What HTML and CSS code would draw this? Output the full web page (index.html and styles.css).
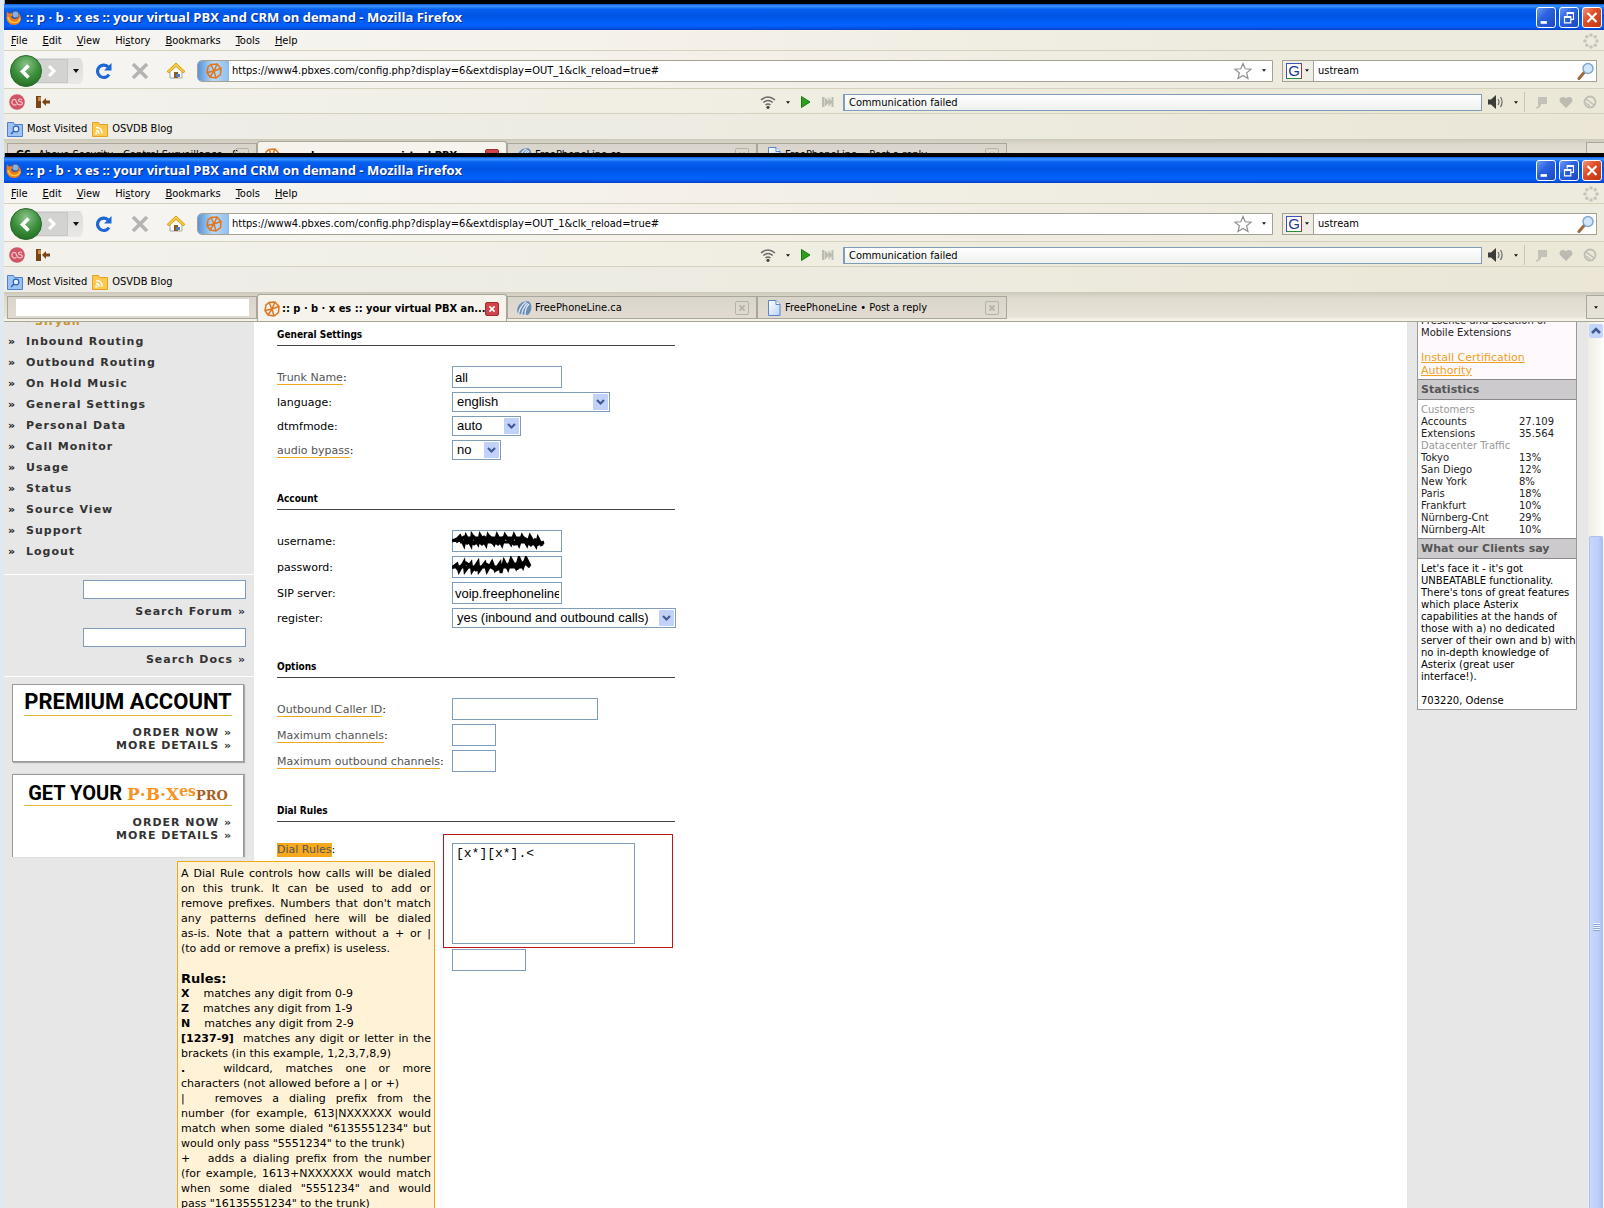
FILE: index.html
```html
<!DOCTYPE html>
<html lang="en">
<head>
<meta charset="utf-8">
<title>:: p · b · x es :: your virtual PBX and CRM on demand</title>
<link rel="stylesheet" href="styles.css">
</head>
<body>
<svg class="defs" aria-hidden="true">
  <defs>
    <radialGradient id="green" cx="50%" cy="30%" r="75%"><stop offset="0" stop-color="#8cc38a"/><stop offset=".55" stop-color="#3c8f3c"/><stop offset="1" stop-color="#1f6a22"/></radialGradient>
    <linearGradient id="sheet" x1="0" y1="0" x2="1" y2="1"><stop offset="0" stop-color="#fff"/><stop offset="1" stop-color="#b9d2f8"/></linearGradient>
    <symbol id="fox" viewBox="0 0 16 16"><circle cx="8.5" cy="7.5" r="6.5" fill="#2c56a8"/><circle cx="9.5" cy="5.5" r="3" fill="#7fb2e8"/><path d="M1 2.5 3 4.5 5.500 4 7 6 5 7.500C6 10 9 10.500 11 9.500 13 8.500 13 6 12 4c2 1.500 3.500 4 2.800 7C14 14 11 16 8 16 3.500 16 .500 12.500.500 9c0-2 .200-4.500.500-6.500z" fill="#ee7a1a"/><path d="M2 8c1 4 4 6 7.500 5.500 2.500-.500 4-2 4.600-4" fill="none" stroke="#f9c440" stroke-width="1.500"/></symbol>
    <symbol id="reload" viewBox="0 0 18 18"><path d="M14 12.500A6.200 6.200 0 1 1 13 4.800" fill="none" stroke="#1d66d8" stroke-width="3.200"/><path d="M16.500 1v7.500H9z" fill="#1d66d8"/></symbol>
    <symbol id="stop" viewBox="0 0 18 18"><path d="M2 2l14 14M16 2 2 16" stroke="#b4b4b2" stroke-width="3.600"/></symbol>
    <symbol id="home" viewBox="0 0 20 18"><path d="M4 8.500 10 3l6 5.500V16H4z" fill="#fdfdf6" stroke="#a6a6a0"/><path d="M1 9.500 10 1l9 8.500-2 1.200L10 4.500 3 10.700z" fill="#f7cf45" stroke="#d59a1d"/><path d="M8 10h4v6H8z" fill="#8b5a25"/><path d="M10 12h4v3h-4z" fill="#4a7fc9"/></symbol>
    <symbol id="pbx" viewBox="0 0 16 16"><g fill="none" stroke="#e0761f" stroke-width="1.500"><path d="M5 1.500 11 1l4 4.500-.500 6L10 15l-6-1L1 9.500 2 4z"/><path d="M8 8 5 1.500M8 8l7-2.500M8 8l2 7M8 8l-7 1.500M8 8l3-7M8 8l-4 6"/></g></symbol>
    <symbol id="star" viewBox="0 0 18 18"><path d="M9 1.500l2.200 5.300 5.800.400-4.400 3.700 1.400 5.600L9 13.400l-5 3.100 1.400-5.600L1 7.200l5.800-.400z" fill="#fff" stroke="#8f8f8f" stroke-width="1.200"/></symbol>
    <symbol id="glass" viewBox="0 0 18 18"><path d="M2 16.500 7.500 10" stroke="#a06a3c" stroke-width="3" stroke-linecap="round"/><circle cx="11" cy="6.500" r="5" fill="#cfe6fb" stroke="#7fa6cf" stroke-width="1.500"/></symbol>
    <symbol id="throb" viewBox="0 0 16 16"><g fill="#c6c5bd"><circle cx="8" cy="2" r="1.800"/><circle cx="12.200" cy="3.800" r="1.800"/><circle cx="14" cy="8" r="1.800"/><circle cx="12.200" cy="12.200" r="1.800"/><circle cx="8" cy="14" r="1.800"/><circle cx="3.800" cy="12.200" r="1.800"/><circle cx="2" cy="8" r="1.800"/><circle cx="3.800" cy="3.800" r="1.800"/></g></symbol>
    <symbol id="lastfm" viewBox="0 0 16 16"><circle cx="8" cy="8" r="7.800" fill="#d05565"/><path d="M7.500 10.500C5 12 2.800 10 2.800 8S5 4.800 6.500 5.800L8.500 10c2 1.500 4.800 1 4.800-.800S9.500 8 9.500 6.500s2-2 3.500-.800" fill="none" stroke="#f5c3c8" stroke-width="1.200"/></symbol>
    <symbol id="door" viewBox="0 0 16 16"><path d="M1 2h5v12H1z" fill="#7a4514"/><path d="M3 3h3v4H3z" fill="#c98a4a"/><path d="M7 8l4-4v2.500h4v3h-4V12z" fill="#7a4514"/></symbol>
    <symbol id="wifi" viewBox="0 0 16 16"><g fill="none" stroke="#6b6b68" stroke-width="1.600"><path d="M1 6q7-6 14 0M3.300 8.500q4.700-4 9.400 0M5.500 11q2.500-2 5 0"/></g><circle cx="8" cy="13.300" r="1.600" fill="#444"/></symbol>
    <symbol id="play" viewBox="0 0 12 12"><path d="M1.500.500 10 6l-8.500 5.500z" fill="#2ca01c" stroke="#1c7a12"/></symbol>
    <symbol id="skip" viewBox="0 0 12 12"><path d="M0 1h2v10H0zM2.500 1l4 4V1l3 4V1h2v10h-2V7l-3 4V7l-4 4z" fill="#bdbcb4"/></symbol>
    <symbol id="sound" viewBox="0 0 16 14"><path d="M0 4.500h3L8 0v14L3 9.500H0z" fill="#3c3c3a"/><path d="M10 4q2 3 0 6M12.500 2q3.200 5 0 10" fill="none" stroke="#6b6b68" stroke-width="1.200"/></symbol>
    <symbol id="tag" viewBox="0 0 14 14"><path d="M3 2h9v7H6v2H3z" fill="#c3c1b8"/><path d="M4 9v3l-3 1" stroke="#c3c1b8" stroke-width="1.500" fill="none"/></symbol>
    <symbol id="heart" viewBox="0 0 14 14"><path d="M7 13 1 7C-1 3 4 0 7 3.500 10 0 15 3 13 7z" fill="#bcbab1"/></symbol>
    <symbol id="ban" viewBox="0 0 14 14"><circle cx="7" cy="7" r="5.500" fill="none" stroke="#bfbdb4" stroke-width="1.800"/><path d="M3 4l8 6M3 8l4 3" stroke="#bfbdb4" stroke-width="1.500"/></symbol>
    <symbol id="folder" viewBox="0 0 16 16"><path d="M.500 1.500h6l1 2h8v12H.500z" fill="#9dc2f5" stroke="#4a80cf"/><circle cx="9" cy="8" r="2.800" fill="#e4f0ff" stroke="#2f62b4" stroke-width="1.200"/><path d="M7 10 4 13" stroke="#2f62b4" stroke-width="1.600"/></symbol>
    <symbol id="feed" viewBox="0 0 16 16"><path d="M.500 1.500h6l1 2h8v12H.500z" fill="#fbc94d" stroke="#e3a021"/><g fill="none" stroke="#fff" stroke-width="1.500"><path d="M4 6.500q6 0 6 6M4 9.500q3 0 3 3"/></g><circle cx="4.500" cy="12.500" r="1.200" fill="#fff"/></symbol>
    <symbol id="shell" viewBox="0 0 16 16"><path d="M2 14C-1 7 5 0 13 1.500 17 5 15.500 12 12 15z" fill="#6a8db8"/><g stroke="#e6eef6" stroke-width="1.200" fill="none"><path d="M2.500 14Q4 6 10 2M5.500 15q1-7 6-12M9 15q0-7 4-11"/></g></symbol>
    <symbol id="page" viewBox="0 0 13 16"><path d="M1 .500h7.500l4 4v11H1z" fill="url(#sheet)" stroke="#5b84cc"/><path d="M8.500.500v4h4" fill="#fff" stroke="#5b84cc"/></symbol>
    <symbol id="x" viewBox="0 0 14 14"><path d="M4 4l6 6M10 4l-6 6" stroke="currentColor" stroke-width="2"/></symbol>
    <symbol id="tri" viewBox="0 0 6 4"><path d="M0 0h6L3 4z" fill="#111"/></symbol>
    <symbol id="min" viewBox="0 0 20 20"><path d="M4 14h7v3H4z" fill="#fff"/></symbol>
    <symbol id="max" viewBox="0 0 20 20"><path d="M8 8V4.500h7V12h-3M8 5.500h7M5 9h7v7H5zM5 10h7" fill="none" stroke="#fff" stroke-width="1.300"/></symbol>
    <symbol id="cls" viewBox="0 0 20 20"><path d="M5 5l10 10M15 5 5 15" stroke="#fff" stroke-width="2.400"/></symbol>
  </defs>
</svg>

<div class="screen">
<section class="window window-behind">
  <header class="titlebar">
    <svg class="i16"><use href="#fox"/></svg>
    <h1>:: p · b · x es :: your virtual PBX and CRM on demand - Mozilla Firefox</h1>
    <button class="wb" aria-label="Minimize"><svg><use href="#min"/></svg></button>
    <button class="wb" aria-label="Restore"><svg><use href="#max"/></svg></button>
    <button class="wb wb-close" aria-label="Close"><svg><use href="#cls"/></svg></button>
  </header>
  <nav class="menubar">
    <button><u>F</u>ile</button><button><u>E</u>dit</button><button><u>V</u>iew</button><button>Hi<u>s</u>tory</button><button><u>B</u>ookmarks</button><button><u>T</u>ools</button><button><u>H</u>elp</button>
    <svg class="i16 push"><use href="#throb"/></svg>
  </nav>
  <div class="navbar">
    <div class="history">
      <button class="back" aria-label="Back"><svg viewBox="0 0 32 32"><circle cx="16" cy="16" r="15.500" fill="url(#green)" stroke="#2b6a2c"/><path d="M18.500 10.500 12.500 16.500l6 6" fill="none" stroke="#fff" stroke-width="3.600"/></svg></button>
      <button class="forward" aria-label="Forward"><svg viewBox="0 0 20 20"><path d="M8 5l5 5-5 5" fill="none" stroke="#fff" stroke-width="3"/></svg></button>
      <svg class="tri"><use href="#tri"/></svg>
    </div>
    <button class="tool" aria-label="Reload"><svg class="i18"><use href="#reload"/></svg></button>
    <button class="tool" aria-label="Stop"><svg class="i18"><use href="#stop"/></svg></button>
    <button class="tool" aria-label="Home"><svg class="i20"><use href="#home"/></svg></button>
    <div class="address">
      <span class="site"><svg class="i16"><use href="#pbx"/></svg></span>
      <input aria-label="Address" value="https://www4.pbxes.com/config.php?display=6&amp;extdisplay=OUT_1&amp;clk_reload=true#">
      <svg class="i18"><use href="#star"/></svg><svg class="tri small"><use href="#tri"/></svg>
    </div>
    <div class="search">
      <span class="engine"><b>G</b><svg class="tri small"><use href="#tri"/></svg></span>
      <input aria-label="Search" value="ustream">
      <svg class="i18"><use href="#glass"/></svg>
    </div>
  </div>
  <div class="radio">
    <svg class="i16"><use href="#lastfm"/></svg><svg class="i16"><use href="#door"/></svg>
    <div class="player">
      <svg class="i16"><use href="#wifi"/></svg><svg class="tri small"><use href="#tri"/></svg>
      <svg class="i12"><use href="#play"/></svg><svg class="i12"><use href="#skip"/></svg>
      <output>Communication failed</output>
      <svg class="i16"><use href="#sound"/></svg><svg class="tri small"><use href="#tri"/></svg>
      <i class="sep"></i>
      <svg class="i14"><use href="#tag"/></svg><svg class="i14"><use href="#heart"/></svg><svg class="i14"><use href="#ban"/></svg>
    </div>
  </div>
  <div class="bookmarks">
    <a href="#"><svg class="i16"><use href="#folder"/></svg>Most Visited</a>
    <a href="#"><svg class="i16"><use href="#feed"/></svg>OSVDB Blog</a>
  </div>
  <div class="tabs">
    <div class="tab tab-first"><b class="gs">GS</b><span>Above Security - Control Surveillance - S</span><button class="x" aria-label="Close tab"><svg><use href="#x"/></svg></button></div>
    <div class="tab tab-on"><svg class="i16"><use href="#pbx"/></svg><span>:: p · b · x es :: your virtual PBX an...</span><button class="x" aria-label="Close tab"><svg><use href="#x"/></svg></button></div>
    <div class="tab"><svg class="i16"><use href="#shell"/></svg><span>FreePhoneLine.ca</span><button class="x" aria-label="Close tab"><svg><use href="#x"/></svg></button></div>
    <div class="tab"><svg class="i16"><use href="#page"/></svg><span>FreePhoneLine • Post a reply</span><button class="x" aria-label="Close tab"><svg><use href="#x"/></svg></button></div>
    <button class="alltabs" aria-label="List all tabs"><svg class="tri small"><use href="#tri"/></svg></button>
  </div>
</section>

<section class="window window-front">
  <header class="titlebar">
    <svg class="i16"><use href="#fox"/></svg>
    <h1>:: p · b · x es :: your virtual PBX and CRM on demand - Mozilla Firefox</h1>
    <button class="wb" aria-label="Minimize"><svg><use href="#min"/></svg></button>
    <button class="wb" aria-label="Restore"><svg><use href="#max"/></svg></button>
    <button class="wb wb-close" aria-label="Close"><svg><use href="#cls"/></svg></button>
  </header>
  <nav class="menubar">
    <button><u>F</u>ile</button><button><u>E</u>dit</button><button><u>V</u>iew</button><button>Hi<u>s</u>tory</button><button><u>B</u>ookmarks</button><button><u>T</u>ools</button><button><u>H</u>elp</button>
    <svg class="i16 push"><use href="#throb"/></svg>
  </nav>
  <div class="navbar">
    <div class="history">
      <button class="back" aria-label="Back"><svg viewBox="0 0 32 32"><circle cx="16" cy="16" r="15.500" fill="url(#green)" stroke="#2b6a2c"/><path d="M18.500 10.500 12.500 16.500l6 6" fill="none" stroke="#fff" stroke-width="3.600"/></svg></button>
      <button class="forward" aria-label="Forward"><svg viewBox="0 0 20 20"><path d="M8 5l5 5-5 5" fill="none" stroke="#fff" stroke-width="3"/></svg></button>
      <svg class="tri"><use href="#tri"/></svg>
    </div>
    <button class="tool" aria-label="Reload"><svg class="i18"><use href="#reload"/></svg></button>
    <button class="tool" aria-label="Stop"><svg class="i18"><use href="#stop"/></svg></button>
    <button class="tool" aria-label="Home"><svg class="i20"><use href="#home"/></svg></button>
    <div class="address">
      <span class="site"><svg class="i16"><use href="#pbx"/></svg></span>
      <input aria-label="Address" value="https://www4.pbxes.com/config.php?display=6&amp;extdisplay=OUT_1&amp;clk_reload=true#">
      <svg class="i18"><use href="#star"/></svg><svg class="tri small"><use href="#tri"/></svg>
    </div>
    <div class="search">
      <span class="engine"><b>G</b><svg class="tri small"><use href="#tri"/></svg></span>
      <input aria-label="Search" value="ustream">
      <svg class="i18"><use href="#glass"/></svg>
    </div>
  </div>
  <div class="radio">
    <svg class="i16"><use href="#lastfm"/></svg><svg class="i16"><use href="#door"/></svg>
    <div class="player">
      <svg class="i16"><use href="#wifi"/></svg><svg class="tri small"><use href="#tri"/></svg>
      <svg class="i12"><use href="#play"/></svg><svg class="i12"><use href="#skip"/></svg>
      <output>Communication failed</output>
      <svg class="i16"><use href="#sound"/></svg><svg class="tri small"><use href="#tri"/></svg>
      <i class="sep"></i>
      <svg class="i14"><use href="#tag"/></svg><svg class="i14"><use href="#heart"/></svg><svg class="i14"><use href="#ban"/></svg>
    </div>
  </div>
  <div class="bookmarks">
    <a href="#"><svg class="i16"><use href="#folder"/></svg>Most Visited</a>
    <a href="#"><svg class="i16"><use href="#feed"/></svg>OSVDB Blog</a>
  </div>
  <div class="tabs">
    <div class="tab tab-first"><i class="blank"></i></div>
    <div class="tab tab-on"><svg class="i16"><use href="#pbx"/></svg><span>:: p · b · x es :: your virtual PBX an...</span><button class="x" aria-label="Close tab"><svg><use href="#x"/></svg></button></div>
    <div class="tab"><svg class="i16"><use href="#shell"/></svg><span>FreePhoneLine.ca</span><button class="x" aria-label="Close tab"><svg><use href="#x"/></svg></button></div>
    <div class="tab"><svg class="i16"><use href="#page"/></svg><span>FreePhoneLine • Post a reply</span><button class="x" aria-label="Close tab"><svg><use href="#x"/></svg></button></div>
    <button class="alltabs" aria-label="List all tabs"><svg class="tri small"><use href="#tri"/></svg></button>
  </div>

  <div class="viewport">
    <aside class="side">
      <p class="current"><span>· <b>Siryan</b></span></p>
      <ul class="menu">
        <li><a href="#">Inbound Routing</a></li>
        <li><a href="#">Outbound Routing</a></li>
        <li><a href="#">On Hold Music</a></li>
        <li><a href="#">General Settings</a></li>
        <li><a href="#">Personal Data</a></li>
        <li><a href="#">Call Monitor</a></li>
        <li><a href="#">Usage</a></li>
        <li><a href="#">Status</a></li>
        <li><a href="#">Source View</a></li>
        <li><a href="#">Support</a></li>
        <li><a href="#">Logout</a></li>
      </ul>
      <div class="finders">
        <input id="forum"><label for="forum">Search Forum »</label>
        <input id="docs"><label for="docs">Search Docs »</label>
      </div>
      <div class="promo">
        <h2 class="promo-title">PREMIUM ACCOUNT</h2>
        <a href="#">ORDER NOW »</a>
        <a href="#">MORE DETAILS »</a>
      </div>
      <div class="promo promo-cut">
        <h2 class="promo-title promo-pro">GET YOUR <span class="brand">P·B·X<sup>es</sup></span><span class="pro">PRO</span></h2>
        <a href="#">ORDER NOW »</a>
        <a href="#">MORE DETAILS »</a>
      </div>
    </aside>

    <main class="main">
      <form class="form">
        <h2>General Settings</h2>
        <div class="row"><label for="trunk"><span class="hint">Trunk Name</span>:</label><input id="trunk" class="w110" value="all"></div>
        <div class="row"><label for="lang">language:</label><select id="lang" class="w158"><option>english</option></select></div>
        <div class="row"><label for="dtmf">dtmfmode:</label><select id="dtmf" class="w69"><option>auto</option></select></div>
        <div class="row"><label for="bypass"><span class="hint">audio bypass</span>:</label><select id="bypass" class="w49"><option>no</option></select></div>

        <h2>Account</h2>
        <div class="row"><label for="user">username:</label><span class="field"><input id="user" class="w110"><svg class="scribble" viewBox="0 0 110 22"><path d="M0 11 5 9 8 6l4 9 2-9 5 9 1-10 6 9 2-9 6 10 2-10 6 9 3-9 5 10 3-10 6 9 3-9 5 10 3-9 5 9 3-9 6 10 2-8 4 8M4 12l8-5 10 7 10-7 10 7 10-7 12 7 8-6 12 7 8-3M10 8h62M8 12h70M14 14l8-7 8 7 8-7 8 7 8-7 8 7 8-7 10 9M82 9l8 5M80 13l12 0"/></svg></span></div>
        <div class="row"><label for="pass">password:</label><span class="field"><input id="pass" class="w110"><svg class="scribble" viewBox="0 0 110 22"><path d="M0 12 5 8l2 7 5-9 1 9 6-8 1 8 6-9 1 9 6-8 2 8 5-9 3 8 5-7 1 10 3-12 4 8 3-10 5 9 3-10 4 9 3-9 4 8M0 11h60M4 13l10-6 10 7 10-6 10 6 12-6M56 8h22M58 11h14M60 6l6 6 6-6 6 5"/></svg></span></div>
        <div class="row"><label for="sip">SIP server:</label><input id="sip" class="w110" value="voip.freephoneline.ca"></div>
        <div class="row"><label for="reg">register:</label><select id="reg" class="w224"><option>yes (inbound and outbound calls)</option></select></div>

        <h2>Options</h2>
        <div class="row"><label for="cid"><span class="hint">Outbound Caller ID</span>:</label><input id="cid" class="w146"></div>
        <div class="row"><label for="maxc"><span class="hint">Maximum channels</span>:</label><input id="maxc" class="w44"></div>
        <div class="row"><label for="maxo"><span class="hint">Maximum outbound channels</span>:</label><input id="maxo" class="w44"></div>

        <h2>Dial Rules</h2>
        <div class="row row-rules">
          <div class="tip-anchor"><label for="rules"><span class="hint hint-on">Dial Rules</span>:</label>
            <div class="tip" role="tooltip">
              <p>A Dial Rule controls how calls will be dialed on this trunk. It can be used to add or remove prefixes. Numbers that don't match any patterns defined here will be dialed <span class="keep">as-is.</span> Note that a pattern without a + or | <span class="keep">(to add</span> or remove a prefix) is useless.</p>
              <h3>Rules:</h3>
              <p><b>X</b>&nbsp;&nbsp;&nbsp; matches any digit from 0-9</p>
              <p><b>Z</b>&nbsp;&nbsp;&nbsp; matches any digit from 1-9</p>
              <p><b>N</b>&nbsp;&nbsp;&nbsp; matches any digit from 2-9</p>
              <p><b>[1237-9]</b>&nbsp; matches any digit or letter in the brackets (in this example, 1,2,3,7,8,9)</p>
              <p><b>.</b>&nbsp;&nbsp; wildcard, matches one or more <span class="keep">characters (not</span> allowed before a | or +)</p>
              <p>|&nbsp;&nbsp; removes a dialing prefix from the <span class="keep">number (for</span> example, 613|NXXXXXX would <span class="keep">match when</span> some dialed "6135551234" but <span class="keep">would only</span> pass "5551234" to the trunk)</p>
              <p>+&nbsp;&nbsp; adds a dialing prefix from the number (for example, 1613+NXXXXXX would match when some dialed "5551234" and would pass "16135551234" to the trunk)</p>
            </div>
          </div>
          <div class="rules"><textarea id="rules">[x*][x*].&lt;</textarea></div>
          <input class="w74 extra" aria-label="Dial rule">
        </div>
      </form>
    </main>

    <aside class="facts">
      <div class="panel">
        <div class="panel-top"><p>Presence and Location of Mobile Extensions</p><a href="#">Install Certification Authority</a></div>
        <h2>Statistics</h2>
        <table class="panel-body">
          <tr><th colspan="2">Customers</th></tr>
          <tr><td>Accounts</td><td>27.109</td></tr>
          <tr><td>Extensions</td><td>35.564</td></tr>
          <tr><th colspan="2">Datacenter Traffic</th></tr>
          <tr><td>Tokyo</td><td>13%</td></tr>
          <tr><td>San Diego</td><td>12%</td></tr>
          <tr><td>New York</td><td>8%</td></tr>
          <tr><td>Paris</td><td>18%</td></tr>
          <tr><td>Frankfurt</td><td>10%</td></tr>
          <tr><td>Nürnberg-Cnt</td><td>29%</td></tr>
          <tr><td>Nürnberg-Alt</td><td>10%</td></tr>
        </table>
        <h2>What our Clients say</h2>
        <div class="quote">
          <p>Let's face it - it's got UNBEATABLE functionality. There's tons of great features which place Asterix capabilities at the hands of those with a) no dedicated <span class="keep">server of their own and b) with</span> no in-depth knowledge of <span class="keep">Asterix (great user</span> interface!).</p>
          <p>703220, Odense</p>
        </div>
      </div>
    </aside>

    <div class="scrollbar">
      <button class="up" aria-label="Scroll up"><svg viewBox="0 0 14 14"><path d="M3 9l4-4 4 4" fill="none" stroke="#3f5a92" stroke-width="2.600"/></svg></button>
      <div class="thumb"><i></i></div>
    </div>
  </div>
</section>
</div>
</body>
</html>
```

FILE: styles.css
```css
* { box-sizing: border-box; }
:root {
  --ui: "DejaVu Sans Condensed", "DejaVu Sans", sans-serif;
  --body: "DejaVu Sans", sans-serif;
  --line: #7f9db9;
}
body { margin: 0; background: #000; font: 11px/14px var(--ui); color: #000; }
h1, h2, h3, p, ul { margin: 0; padding: 0; }
button { font: inherit; color: inherit; background: none; border: 0; padding: 0; }
input, textarea, select { font: inherit; color: inherit; border: 1px solid var(--line); border-radius: 0; background: #fff; margin: 0; padding: 0; outline: 0; }
svg { display: block; flex: none; }
.defs { position: absolute; width: 0; height: 0; }
.i12 { width: 12px; height: 12px; }
.i14 { width: 14px; height: 14px; }
.i16 { width: 16px; height: 16px; }
.i18 { width: 18px; height: 18px; }
.i20 { width: 20px; height: 18px; }
.tri { width: 6px; height: 4px; }
.tri.small { width: 4px; height: 3px; }
.push { margin-left: auto; }
.keep { white-space: nowrap; }

.screen { display: flex; flex-direction: column; height: 100vh; overflow: hidden; padding-top: 4px; border-left: 4px solid #dfe9f1; box-shadow: inset 1px 0 #8fb0d0; }
.window { background: #f1efe2; }
.window-behind { flex: none; height: 149px; overflow: hidden; }
.window-front { flex: 1; min-height: 0; display: flex; flex-direction: column; margin-top: 4px; }

.titlebar { flex: none; display: flex; align-items: center; gap: 3px; height: 26px; padding: 0 2px; background: linear-gradient(#0a55dc, #3d95ff 8%, #0560f0 20%, #0054e3 45%, #0062ff 80%, #0058ee 90%, #003fc0); }
.titlebar h1 { flex: 1; padding-left: 1px; font: bold 13px/18px "Open Sans", sans-serif; color: #fff; text-shadow: 1px 1px #0a2f8a; white-space: nowrap; }
.wb { width: 20px; height: 21px; border: 1px solid #fff; border-radius: 3px; background: linear-gradient(135deg, #6f9df5, #2c62e0 40%, #1c48c4); }
.wb svg { width: 18px; height: 19px; }
.wb-close { background: linear-gradient(135deg, #f0957a, #e0502a 40%, #bf3410); }

.menubar, .navbar, .radio { flex: none; display: flex; align-items: center; padding-top: 2px; border-bottom: 1px solid #d5d1bd; box-shadow: 0 1px #fff; background: linear-gradient(90deg, #f6f5f2, #f5f1ea 40%, #edeade 80%); }
.menubar { height: 21px; padding-left: 7px; padding-right: 5px; gap: 15px; }
.navbar { height: 38px; padding-left: 6px; padding-right: 7px; }
.history { display: flex; align-items: center; width: 73px; background: linear-gradient(#dddddb, #e9e8e6) no-repeat 16px 50% / 57px 26px; border-radius: 0 10px 10px 0; }
.back { width: 32px; height: 32px; z-index: 1; }
.back svg { width: 32px; height: 32px; }
.forward { margin-left: -8px; width: 34px; height: 24px; background: #d3d3d2; border: 1px solid #c6c6c4; }
.forward svg { width: 32px; height: 20px; }
.history .tri { margin-left: 5px; }
.tool { display: flex; justify-content: center; width: 36px; }
.history + .tool { margin-left: 3px; }
.address, .search { display: flex; align-items: center; height: 22px; border: 1px solid #a5a294; background: #fff; }
.address { flex: 1; margin-left: 3px; padding-right: 6px; gap: 10px; border-radius: 5px 0 0 5px; }
.address input { flex: 1; border: 0; margin-left: -7px; min-width: 0; }
.site { display: flex; justify-content: center; align-items: center; width: 31px; height: 20px; border-radius: 4px 0 0 4px; background: linear-gradient(90deg, #5b93d6, #b9dbf8 50%, #8fbdec); }
.search { width: 315px; margin-left: 9px; padding-right: 1px; }
.engine { display: flex; align-items: center; gap: 3px; height: 20px; padding: 0 4px 0 3px; border-right: 1px solid #a5a294; background: #f0eee4; }
.engine b { width: 16px; height: 16px; border: 1px solid; border-color: #3c57b8 #c22 #2a8a3c #3c57b8; background: #fff; color: #1a3a9c; font: 15px/14px "Liberation Sans", sans-serif; text-align: center; }
.search input { flex: 1; min-width: 0; border: 0; padding-left: 4px; }

.radio { height: 25px; padding-left: 5px; padding-right: 7px; gap: 10px; background: linear-gradient(90deg, #f2f1ec, #f1efe4 40%, #ebe8d8 90%); }
.player { display: flex; align-items: center; width: 837px; max-width: 60%; margin-left: auto; gap: 10px; }
.player output { flex: 1; height: 17px; padding: 0 4px; border: 1px solid var(--line); border-left-width: 2px; background: linear-gradient(#fff, #eef1ee); line-height: 15px; margin: 0 -4px 0 -1px; }
.sep { align-self: stretch; width: 1px; height: 20px; margin-left: -4px; background: #c8c5b4; }
.bookmarks { flex: none; display: flex; align-items: center; height: 25px; padding: 4px 3px 0; gap: 5px; background: linear-gradient(90deg, #eeede8, #edebdf 60%, #ebe6d6); }
.bookmarks a { display: flex; align-items: center; gap: 4px; color: #000; text-decoration: none; }

.tabs { flex: none; display: flex; align-items: flex-end; height: 30px; padding: 0 0 2px 3px; background: linear-gradient(#cbc8ba, #dfdacd 20%, #e8e3d8 85%, #f5f2ea 94%); border-bottom: 1px solid #a8a792; }
.tab { display: flex; align-items: center; gap: 3px; width: 250px; height: 23px; padding: 1px 7px 0 8px; border: 1px solid #a8a79a; background: linear-gradient(#d9d5cc, #e2dbd2); white-space: nowrap; }
.tab span { flex: 1; min-width: 0; }
.tab-first { overflow: hidden; padding-top: 0; }
.tab-first .blank { flex: 1; height: 17px; background: #fff; }
.tab-on { height: 27px; margin-bottom: -2px; padding-left: 6px; gap: 2px; border-bottom: 0; border-radius: 3px 3px 0 0; background: #f6f3ec; font-weight: bold; }
.gs { margin-right: 4px; }
.x { width: 14px; height: 14px; border: 1px solid #b5b2a8; border-radius: 2px; color: #b5b2a8; }
.x svg { width: 12px; height: 12px; }
.tab-on .x { background: #d0444a; border-color: #a32a30; color: #fff; }
.alltabs { display: flex; align-items: center; justify-content: center; margin-left: auto; width: 18px; height: 24px; border: 1px solid #a8a79a; border-right: 0; background: #e6e1d6; }

.viewport { flex: 1; min-height: 0; display: flex; overflow: hidden; background: #fff; font-family: var(--body); }
.side { flex: none; width: 250px; background: #e7e7e7; color: #333; }
.current { display: flex; align-items: flex-end; height: 7px; overflow: hidden; padding-left: 22px; color: #c8942a; letter-spacing: 1px; }
.menu { list-style: none; padding: 2px 4px 12px; border-bottom: 1px solid #fff; }
.menu li { display: flex; height: 21px; align-items: center; font-weight: bold; letter-spacing: 1px; }
.menu li::before { content: "»"; width: 18px; color: #111; }
.menu a { color: #333; text-decoration: none; }
.finders { display: flex; flex-direction: column; align-items: flex-end; padding: 5px 8px 0 0; border-bottom: 1px solid #fff; font-weight: bold; letter-spacing: 1px; }
.finders input { width: 163px; height: 19px; }
.finders label { height: 29px; line-height: 25px; }
.promo { display: flex; flex-direction: column; align-items: flex-end; width: 232px; height: 78px; margin: 7px 0 12px 8px; padding: 0 11px; border: 1px solid #999; box-shadow: 1px 1px 1px #aaa; background: #fff; }
.promo-cut { height: 83px; border-bottom: 0; box-shadow: 1px 0 1px #aaa; }
.promo a { color: #333; font: bold 11px/13px var(--body); letter-spacing: 1px; text-decoration: none; }
.promo-title { align-self: stretch; height: 31px; margin-bottom: 10px; border-bottom: 1px solid #e8b840; color: #000; font: bold 22px/33px Roboto, sans-serif; text-align: center; white-space: nowrap; }
.promo-pro { font-size: 20px; line-height: 36px; }
.brand { color: #f7931e; font-family: "DejaVu Serif", serif; font-size: 17px; }
.brand sup { font-size: 14px; line-height: 0; vertical-align: 4px; }
.pro { color: #a8601c; font: bold 13px/13px "DejaVu Serif", serif; }

.main { flex: 1; min-width: 0; padding: 6px 23px 0; }
.form { width: 398px; }
.form h2 { margin: 32px 0 20px; padding-bottom: 3px; border-bottom: 1px solid #444; font: bold 10px/14px var(--ui); }
.form h2:first-child { margin-top: 0; }
.row { display: grid; grid-template-columns: 175px max-content; align-items: center; margin-bottom: 4px; white-space: nowrap; }
.row:has(+ h2) { margin-bottom: 0; }
.row > label { padding-top: 2px; }
.row input { height: 22px; padding: 1px 2px; font: 13px/16px "Liberation Sans", sans-serif; }
.row select { appearance: none; height: 20px; padding: 0 4px; font: 13px/18px "Liberation Sans", sans-serif; background: #fff url("data:image/svg+xml,%3Csvg xmlns='http://www.w3.org/2000/svg' width='15' height='16'%3E%3Crect width='15' height='16' rx='1' fill='%23c0d2fa'/%3E%3Cpath d='M4 6l3.500 3.500L11 6' fill='none' stroke='%23405a94' stroke-width='2.200'/%3E%3C/svg%3E") no-repeat right 1px center; }
.w44 { width: 44px; } .w49 { width: 49px; } .w69 { width: 69px; } .w74 { width: 74px; }
.w110 { width: 110px; } .w146 { width: 146px; } .w158 { width: 158px; } .w224 { width: 224px; }
.hint { color: #555; border-bottom: 1px solid #f0a818; }
.hint-on { background: #f7a81c; }
.field { position: relative; display: flex; }
.scribble { position: absolute; left: 0; top: 0; width: 110px; height: 22px; fill: none; stroke: #000; stroke-width: 3; }
.row-rules { align-items: start; padding-top: 1px; }
.rules { position: relative; width: 183px; height: 101px; }
.rules textarea { width: 183px; height: 101px; padding: 2px 3px; font: 13px/16px "Liberation Mono", monospace; resize: none; overflow: hidden; display: block; }
.rules::after { content: ""; position: absolute; left: -9px; top: -9px; width: 228px; height: 112px; border: 1px solid #c0141c; pointer-events: none; }
.extra { grid-column: 2; margin-top: 5px; }
.tip-anchor { position: relative; }
.tip { position: absolute; left: -100px; top: 18px; width: 258px; padding: 4px 3px; border: 1px solid #f0a818; background: #fff2d6; font-size: 11px; line-height: 15px; text-align: justify; white-space: normal; }
.tip h3 { margin-top: 15px; font-size: 13px; line-height: 15px; }

.facts { flex: none; width: 181px; padding: 0 11px 0 10px; background: #e7e7e7; color: #222; font-size: 10px; line-height: 12px; }
.panel { border: 1px solid #999; border-top: 0; background: #fff; }
.panel-top { padding: 0 4px 2px 3px; background: #fdf9fd; }
.panel-top p { margin: -7px 0 12px; }
.panel-top a { color: #f0a020; font-size: 11px; line-height: 13px; }
.panel h2 { height: 21px; padding-left: 3px; border: 1px solid #888; border-width: 1px 0; background: #cccacc; color: #555; font-size: 11px; line-height: 20px; }
.panel-body { width: 100%; padding: 4px 2px 2px; border-spacing: 0; }
.panel-body td, .panel-body th { padding: 0 1px; text-align: left; font-weight: normal; height: 12px; }
.panel-body th { color: #999; }
.panel-body td:first-child { width: 98px; }
.quote { padding: 4px 3px 2px; color: #000; }
.quote p + p { margin-top: 12px; }

.scrollbar { flex: none; width: 16px; display: flex; flex-direction: column; padding: 2px 1px 0; background: linear-gradient(90deg, #eeede5, #fdfdfa); }
.up { height: 14px; margin-bottom: 198px; border-radius: 2px; background: #c4d5fb; }
.up svg { width: 14px; height: 14px; }
.thumb { flex: 1; display: flex; justify-content: center; border: 1px solid #a9c0f4; border-bottom: 0; border-radius: 2px 2px 0 0; background: linear-gradient(90deg, #c8d8fd, #bccffa 70%, #a9c2f2); }
.thumb i { width: 7px; height: 8px; margin-top: 386px; background: repeating-linear-gradient(#eef4ff 0 1px, #8ca9ea 1px 2px); }
```
